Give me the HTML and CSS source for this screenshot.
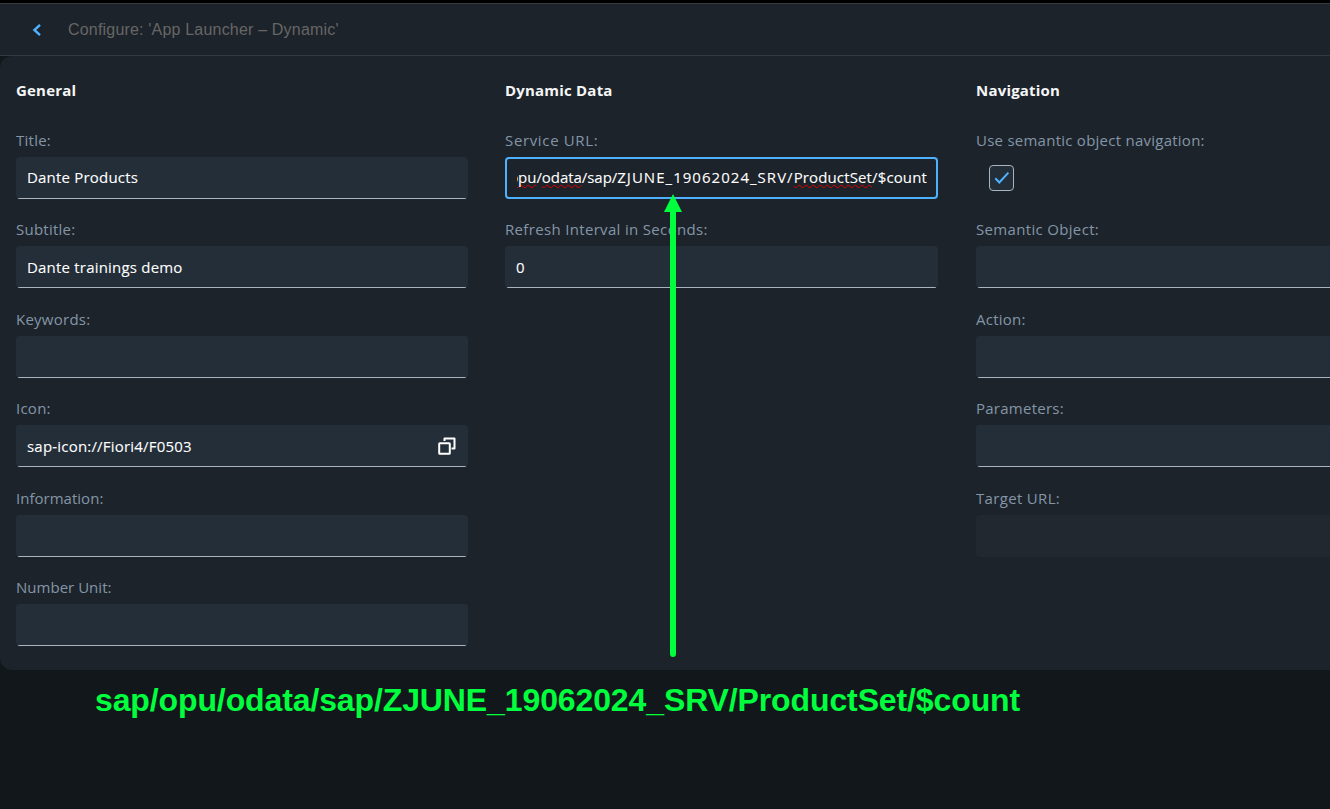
FILE: index.html
```
<!DOCTYPE html>
<html lang="en">
<head>
<meta charset="utf-8">
<title>Configure: 'App Launcher – Dynamic'</title>
<link rel="stylesheet" href="styles.css">
</head>
<body>
<div class="page">
  <header class="header">
    <svg class="back" viewBox="0 0 10 14" width="10" height="14"><path d="M8 1.8 2.4 7 8 12.2" fill="none" stroke="#4db1ff" stroke-width="2.4"/></svg>
    <h1 class="title">Configure: 'App Launcher – Dynamic'</h1>
  </header>
  <main class="panel">
    <section class="column general">
      <h2 class="heading">General</h2>
      <div class="field"><span class="label">Title:</span><div class="input"><span class="value">Dante Products</span></div></div>
      <div class="field"><span class="label">Subtitle:</span><div class="input"><span class="value">Dante trainings demo</span></div></div>
      <div class="field"><span class="label">Keywords:</span><div class="input"></div></div>
      <div class="field"><span class="label">Icon:</span><div class="input with-icon"><span class="value">sap-icon://Fiori4/F0503</span>
        <svg class="value-help" viewBox="0 0 18 18" width="18" height="18"><path d="M6.5 4V1.5H16.5V11.5H13.5" fill="none" stroke="#fff" stroke-width="2" stroke-linejoin="round"/><rect x="1.2" y="6.2" width="10.6" height="10.6" rx=".6" fill="none" stroke="#fff" stroke-width="2"/></svg></div></div>
      <div class="field"><span class="label snug">Information:</span><div class="input"></div></div>
      <div class="field"><span class="label snug">Number Unit:</span><div class="input"></div></div>
    </section>
    <section class="column dynamic">
      <h2 class="heading">Dynamic Data</h2>
      <div class="field"><span class="label wide">Service URL:</span><div class="input focused"><div class="clip"><span class="value url"><span class="root"><span class="typo">opu</span>/<span class="typo">odata</span>/sap/</span><span class="service">ZJUNE_19062024_SRV/</span><span class="typo">ProductSet</span>/$count</span></div></div></div>
      <div class="field"><span class="label roomy">Refresh Interval in Seconds:</span><div class="input"><span class="value">0</span></div></div>
    </section>
    <section class="column navigation">
      <h2 class="heading">Navigation</h2>
      <div class="field"><span class="label">Use semantic object navigation:</span><div class="check-row"><span class="checkbox"><svg viewBox="0 0 16 14" width="16" height="14"><path d="M1.3 7.3 5.3 11.5 14.4 1.6" fill="none" stroke="#4db1ff" stroke-width="2"/></svg></span></div></div>
      <div class="field"><span class="label roomy">Semantic Object:</span><div class="input"></div></div>
      <div class="field"><span class="label">Action:</span><div class="input"></div></div>
      <div class="field"><span class="label">Parameters:</span><div class="input"></div></div>
      <div class="field"><span class="label roomy">Target URL:</span><div class="input disabled"></div></div>
    </section>
  </main>
  <p class="note">sap/opu/odata/sap/ZJUNE_19062024_SRV/ProductSet/$count</p>
  <svg class="arrow" viewBox="0 0 18 464" width="18" height="464"><path d="M9 14V460" stroke="#00ff3c" stroke-width="6" stroke-linecap="round"/><path d="M9 0 18 18H0Z" fill="#00ff3c"/></svg>
</div>
</body>
</html>
```
FILE: styles.css
```
* { box-sizing: border-box; }
body { margin: 0; background: #12171c; font-family: "Open Sans", sans-serif; }
.page { position: relative; width: 1330px; height: 809px; overflow: hidden; border-top: 3px solid #000; }
.header { display: flex; align-items: center; height: 53px; padding-left: 32px; background: #1d232a; border-top: 1px solid #37393b; border-bottom: 1px solid #323941; }
.back { display: block; }
.title { margin: 0 0 0 26px; font: 400 16px/20px "Liberation Sans", Arial, sans-serif; color: #666; letter-spacing: 0.19px; }
.panel { display: flex; height: 614px; padding: 22px 0 0 16px; background: #1d232a; border-radius: 12px 0 0 12px; }
.column { flex: none; }
.general { width: 452px; margin-right: 37px; }
.dynamic { width: 433px; margin-right: 38px; }
.navigation { width: 432px; }
.heading { margin: 0 0 26px; font-size: 15px; line-height: 25px; font-weight: 700; color: #f5f6f7; letter-spacing: 0.2px; }
.field { height: 89.4px; }
.label { display: block; height: 28px; line-height: 22px; font-size: 15px; color: #8396a8; letter-spacing: 0.25px; white-space: nowrap; }
.label.snug { letter-spacing: 0.02px; }
.label.roomy { letter-spacing: 0.33px; }
.label.wide { letter-spacing: 0.65px; }
.input { display: flex; align-items: center; height: 42px; padding: 0 11px; background: linear-gradient(#a9b4be, #a9b4be) center bottom / calc(100% - 4px) 1px no-repeat #242e38; border-radius: 4px; }
.value { font-size: 15px; line-height: 22px; margin-top: -1px; font-weight: 500; color: #fff; -webkit-text-stroke: 0.1px #fff; white-space: nowrap; letter-spacing: 0.2px; }
.heading + .field .value { margin-top: -2px; }
.with-icon { justify-content: space-between; padding-right: 12px; }
.focused { background: #1d232a; border: 2px solid #4db1ff; padding: 0 9px 0 10px; }
.clip { display: flex; justify-content: flex-end; width: 100%; overflow: hidden; }
.url { letter-spacing: 0.13px; }
.root { letter-spacing: -0.05px; }
.service { letter-spacing: 1.03px; }
.typo { text-decoration: underline wavy #e00000 1.2px; text-underline-offset: 1px; text-decoration-skip-ink: none; }
.disabled { background: #21282f; }
.check-row { padding: 8px 0 0 13px; }
.checkbox { display: flex; align-items: center; justify-content: center; width: 25px; height: 26px; background: #242e38; border: 1px solid #a9b4be; border-radius: 4px; }
.note { margin: 11px 0 0 95px; font: 700 32px/38px "Liberation Sans", Arial, sans-serif; letter-spacing: -0.115px; color: #00ff3c; white-space: nowrap; }
.arrow { position: absolute; left: 664px; top: 191px; }
```
